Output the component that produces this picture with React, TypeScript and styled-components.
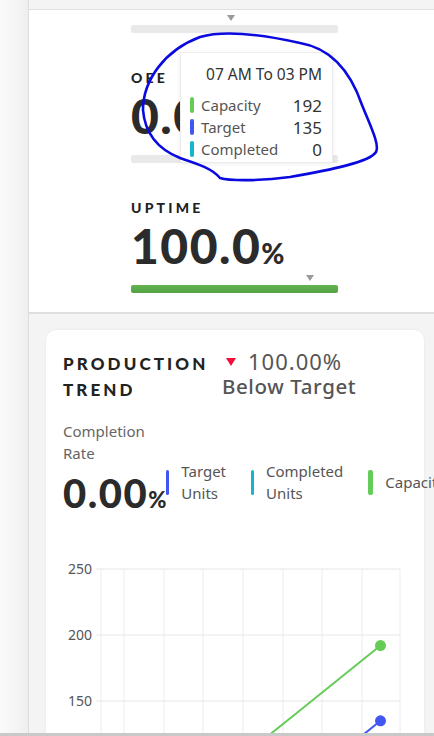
import React from "react";
import styled, { createGlobalStyle } from "styled-components";

const Global = createGlobalStyle`
  html, body { margin: 0; padding: 0; overflow: hidden; background: #f4f4f4; }
  body { font-family: "Noto Sans", "Open Sans", sans-serif; }
  * { box-sizing: border-box; }
`;

const Page = styled.div`
  display: flex;
  height: 736px;
  overflow: hidden;
  border-bottom: 3px solid #c9c9c9;
`;

const Gutter = styled.div`
  width: 28px;
  flex: none;
  background: linear-gradient(90deg, #fafafa 0%, #f3f3f3 70%, #eeeeee 100%);
`;

const Main = styled.div`
  flex: 1;
  min-width: 0;
  padding-top: 9px;
  border-left: 1px solid #dcdcdc;
  background: #f4f4f4;
`;

const KpiPanel = styled.section`
  position: relative;
  background: #ffffff;
  border-top: 1px solid #e0e0e0;
  border-bottom: 2px solid #dedede;
  padding: 5px 0 19px 102px;
`;

const Marker = styled.div<{ $offset: number }>`
  width: 0;
  height: 0;
  margin-left: ${(p) => p.$offset}px;
  border-left: 4px solid transparent;
  border-right: 4px solid transparent;
  border-top: 6px solid #9a9a9a;
`;

const Track = styled.div<{ $fill?: string }>`
  width: 207px;
  height: 8px;
  border-radius: 2px;
  background: ${(p) => p.$fill ?? "#e9e9e9"};
  margin-top: 4px;
`;

const KpiLabel = styled.div`
  margin-top: 37px;
  font-family: Lato, "Liberation Sans", sans-serif;
  font-weight: 900;
  font-size: 14px;
  line-height: 16px;
  letter-spacing: 3.2px;
  color: #222;
`;

const KpiValue = styled.div`
  margin-top: 6px;
  margin-bottom: 5px;
  font-family: Lato, "Liberation Sans", sans-serif;
  font-weight: 900;
  font-size: 48px;
  line-height: 48px;
  color: #2b2b2b;
  letter-spacing: 1.5px;
  small {
    font-size: 28px;
    line-height: 0;
    letter-spacing: 0;
  }
`;

const Tooltip = styled.div`
  position: absolute;
  left: 151px;
  top: 42px;
  width: 153px;
  height: 111px;
  background: #fff;
  border: 1px solid #ececec;
  box-shadow: 0 1px 4px rgba(0, 0, 0, 0.08);
  padding: 11px 10px 0 9px;
`;

const TipHead = styled.div`
  text-align: right;
  font-size: 15.5px;
  line-height: 20px;
  color: #333;
  margin-bottom: 10px;
`;

const TipRow = styled.div`
  display: flex;
  align-items: center;
  height: 22px;
`;

const Swatch = styled.span<{ $color: string; $w?: number; $h?: number }>`
  width: ${(p) => p.$w ?? 4}px;
  height: ${(p) => p.$h ?? 16}px;
  border-radius: 2px;
  background: ${(p) => p.$color};
  flex: none;
`;

const TipLabel = styled.span`
  margin-left: 7px;
  flex: 1;
  font-size: 15px;
  color: #555;
`;

const TipValue = styled.span`
  font-size: 17px;
  color: #333;
`;

const Scribble = styled.svg`
  position: absolute;
  left: -29px;
  top: -10px;
  pointer-events: none;
`;

const Card = styled.section`
  margin: 16px 10px 0 17px;
  background: #fff;
  border-radius: 10px;
  box-shadow: 0 0 3px rgba(0, 0, 0, 0.06);
  padding: 21px 0 0 17px;
  height: 600px;
`;

const CardHead = styled.div`
  display: flex;
  align-items: flex-start;
`;

const Title = styled.h2`
  margin: 0;
  width: 159px;
  font-family: Lato, "Liberation Sans", sans-serif;
  font-weight: 900;
  font-size: 17px;
  line-height: 26px;
  letter-spacing: 3.1px;
  color: #222;
`;

const Status = styled.div`
  color: #555;
  margin-top: -2px;
`;

const StatusLine = styled.div`
  font-size: 22px;
  line-height: 25px;
  letter-spacing: 1px;
  display: flex;
  align-items: center;
  gap: 12px;
  padding-left: 4px;
`;

const DownArrow = styled.span`
  width: 0;
  height: 0;
  border-left: 5.5px solid transparent;
  border-right: 5.5px solid transparent;
  border-top: 8px solid #f0103a;
`;

const StatusSub = styled.div`
  font-size: 20.5px;
  line-height: 25px;
  letter-spacing: 0.6px;
  font-weight: 500;
`;

const RateRow = styled.div`
  display: flex;
  align-items: flex-start;
  margin-top: 17px;
`;

const RateBlock = styled.div``;

const RateLabel = styled.div`
  width: 90px;
  font-size: 15px;
  line-height: 22px;
  color: #666;
`;

const RateValue = styled.div`
  margin-top: 9px;
  font-family: Lato, "Liberation Sans", sans-serif;
  font-weight: 900;
  font-size: 40px;
  line-height: 40px;
  color: #2b2b2b;
  letter-spacing: 1.5px;
  small {
    font-size: 22px;
    line-height: 0;
    letter-spacing: 0;
  }
`;

const Legend = styled.div`
  display: flex;
  gap: 25px;
  margin-top: 40px;
  white-space: nowrap;
`;

const LegendItem = styled.div`
  display: flex;
  align-items: center;
  gap: 12px;
`;

const LegendText = styled.span`
  font-size: 15px;
  line-height: 22px;
  color: #555;
`;

const Chart = styled.svg`
  display: block;
  margin-top: 36px;
  overflow: visible;
`;

const GREEN = "#66cc58";
const BLUE = "#4257f2";
const CYAN = "#13b6cc";

const yOf = (v: number) => 20 + (250 - v) * 1.32;
const vLines = [38, 61, 101, 140, 180, 220, 259, 299, 337];
const hVals = [250, 200, 150, 100, 50, 0];
const xs = Array.from({ length: 8 }, (_, i) => 317.5 - 39.4 * (7 - i));
const capacity = xs.map((_, i) => 24 * (i + 1));
const target = xs.map((_, i) => 135 - 24 * (7 - i));

export default function App() {
  const pts = (vals: number[]) => xs.map((x, i) => `${x},${yOf(Math.max(vals[i], 0))}`).join(" ");
  return (
    <>
      <Global />
      <Page>
        <Gutter />
        <Main>
          <KpiPanel>
            <Marker $offset={96} />
            <Track />
            <KpiLabel>OEE</KpiLabel>
            <KpiValue>
              0.0<small>%</small>
            </KpiValue>
            <Marker $offset={60} />
            <Track />
            <KpiLabel>UPTIME</KpiLabel>
            <KpiValue>
              100.0<small>%</small>
            </KpiValue>
            <Marker $offset={175} />
            <Track $fill="linear-gradient(180deg, #62b252, #54a244)" />
            <Tooltip>
              <TipHead>07 AM To 03 PM</TipHead>
              <TipRow>
                <Swatch $color={GREEN} />
                <TipLabel>Capacity</TipLabel>
                <TipValue>192</TipValue>
              </TipRow>
              <TipRow>
                <Swatch $color={BLUE} />
                <TipLabel>Target</TipLabel>
                <TipValue>135</TipValue>
              </TipRow>
              <TipRow>
                <Swatch $color={CYAN} />
                <TipLabel>Completed</TipLabel>
                <TipValue>0</TipValue>
              </TipRow>
            </Tooltip>
            <Scribble width="434" height="200" viewBox="0 0 434 200">
              <path
                d="M143 110 C143 80 165 50 200 37 C225 30 260 34 300 43 C330 48 350 70 362 105 C370 125 380 145 376 152 C370 162 330 170 290 177 C260 181 230 181 220 178 C212 168 195 163 180 158 C160 150 145 135 143 110 Z"
                fill="none"
                stroke="#0a0ae0"
                strokeWidth="2.6"
                strokeLinejoin="round"
              />
            </Scribble>
          </KpiPanel>
          <Card>
            <CardHead>
              <Title>PRODUCTION TREND</Title>
              <Status>
                <StatusLine>
                  <DownArrow />
                  100.00%
                </StatusLine>
                <StatusSub>Below Target</StatusSub>
              </Status>
            </CardHead>
            <RateRow>
              <RateBlock>
                <RateLabel>Completion Rate</RateLabel>
                <RateValue>
                  0.00<small>%</small>
                </RateValue>
              </RateBlock>
              <Legend>
                <LegendItem>
                  <Swatch $color={BLUE} $w={3} $h={25} />
                  <LegendText>
                    Target
                    <br />
                    Units
                  </LegendText>
                </LegendItem>
                <LegendItem>
                  <Swatch $color={CYAN} $w={3} $h={25} />
                  <LegendText>
                    Completed
                    <br />
                    Units
                  </LegendText>
                </LegendItem>
                <LegendItem>
                  <Swatch $color={GREEN} $w={5} $h={25} />
                  <LegendText>Capacity</LegendText>
                </LegendItem>
              </Legend>
            </RateRow>
            <Chart width="361" height="430" viewBox="0 0 361 430">
              {vLines.map((x) => (
                <line key={x} x1={x} x2={x} y1={20} y2={416} stroke="#ececec" strokeWidth="1" />
              ))}
              {hVals.map((v) => (
                <g key={v}>
                  <line x1={33} x2={337} y1={yOf(v)} y2={yOf(v)} stroke="#e6e6e6" strokeWidth="1" />
                  <text
                    x={29}
                    y={yOf(v) + 5}
                    textAnchor="end"
                    fontSize="14"
                    fill="#555"
                    fontFamily="Noto Sans, sans-serif"
                  >
                    {v}
                  </text>
                </g>
              ))}
              <polyline points={pts(capacity)} fill="none" stroke={GREEN} strokeWidth="2" />
              <polyline points={pts(target)} fill="none" stroke={BLUE} strokeWidth="2" />
              <circle cx={xs[7]} cy={yOf(192)} r="5.5" fill={GREEN} />
              <circle cx={xs[7]} cy={yOf(135)} r="5.5" fill={BLUE} />
            </Chart>
          </Card>
        </Main>
      </Page>
    </>
  );
}
